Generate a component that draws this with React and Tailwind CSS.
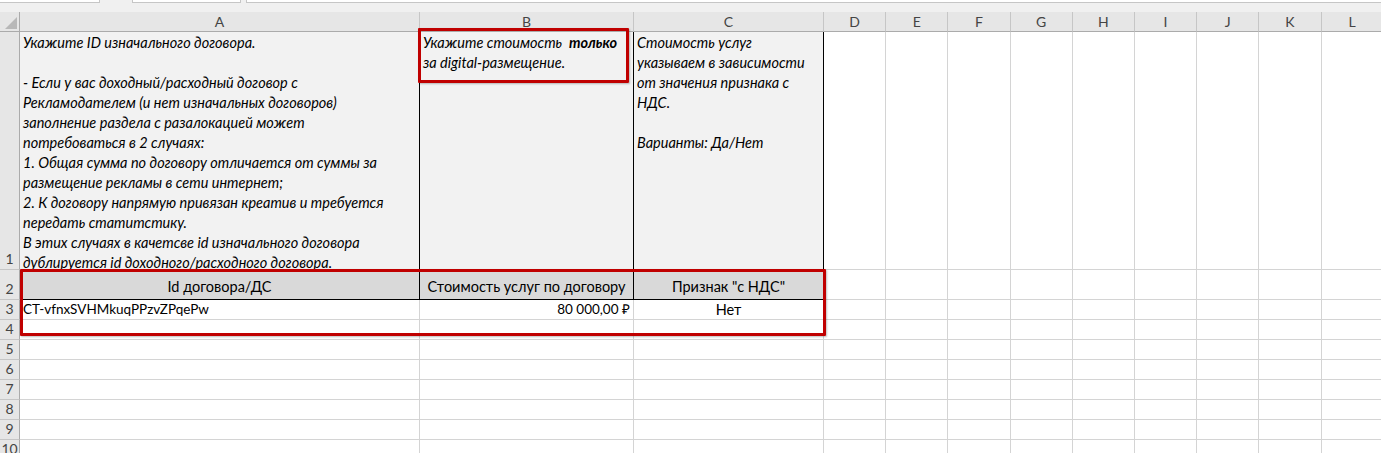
import React from 'react';

const font = { fontFamily: 'Lato, "Open Sans", sans-serif' };

const extraCols = ['D', 'E', 'F', 'G', 'H', 'I', 'J', 'K', 'L'];

// пустые ячейки справа от таблицы
function EmptyCells({ row }) {
    return extraCols.map((c) => (
        <div key={row + c} className="border-r border-b border-[#d4d4d4] bg-white" />
    ));
}

function RowNum({ n }) {
    return (
        <div className="flex items-end justify-center pb-[1px] bg-[#e6e6e6] border-r border-b border-r-[#ababab] border-b-[#c6c6c6] text-[14px] leading-[18px] text-[#444]">
            {n}
        </div>
    );
}

export default function App() {
    return (
        <div className="relative w-[1381px] h-[453px] overflow-hidden bg-white text-black" style={font}>
            {/* полоса сверху */}
            <div className="h-[12px] bg-[#f0f0f0] flex items-start">
                <div className="h-[3px] w-[100px] bg-white border-b border-r border-[#c6c6c6]" />
                <div className="h-[3px] w-[32px]" />
                <div className="h-[3px] w-[109px] bg-white border-b border-x border-[#c6c6c6]" />
                <div className="h-[3px] w-[5px]" />
                <div className="h-[3px] flex-1 bg-white border-b border-l border-[#c6c6c6]" />
            </div>

            <div className="grid grid-cols-[20px_400px_214px_190px_repeat(9,62.2px)] grid-rows-[20px_238px_30px_20px_20px_repeat(6,20px)]">
                {/* заголовки колонок */}
                <div className="relative bg-[#e6e6e6] border-r border-b border-r-[#ababab] border-b-[#ababab]">
                    <div className="absolute right-[2px] bottom-[2px] w-0 h-0" style={{ borderBottom: '12px solid #b8b8b8', borderLeft: '12px solid transparent' }} />
                </div>
                {['A', 'B', 'C', ...extraCols].map((c) => (
                    <div key={c} className="flex items-center justify-center bg-[#e6e6e6] border-r border-b border-r-[#c6c6c6] border-b-[#ababab] text-[14px] text-[#444]">
                        {c}
                    </div>
                ))}

                {/* строка 1 */}
                <RowNum n={1} />
                <div className="bg-[#f2f2f2] border-r border-black pl-[3px] pt-[1px] italic text-[14.5px] leading-[20px] whitespace-nowrap overflow-hidden">
                    Укажите ID изначального договора.<br />
                    <br />
                    - Если у вас доходный/расходный договор с<br />
                    Рекламодателем (и нет изначальных договоров)<br />
                    заполнение раздела с разалокацией может<br />
                    потребоваться в 2 случаях:<br />
                    1. Общая сумма по договору отличается от суммы за<br />
                    размещение рекламы в сети интернет;<br />
                    2. К договору напрямую привязан креатив и требуется<br />
                    передать статитстику.<br />
                    В этих случаях в качетсве id изначального договора<br />
                    дублируется id доходного/расходного договора.
                </div>
                <div className="bg-[#f2f2f2] border-r border-black pl-[3px] pt-[1px] italic text-[14.5px] leading-[20px] whitespace-nowrap overflow-hidden">
                    Укажите стоимость{'\u00a0 '}<b>только</b><br />
                    за digital-размещение.
                </div>
                <div className="bg-[#f2f2f2] border-r border-black pl-[3px] pt-[1px] italic text-[14.5px] leading-[20px] whitespace-nowrap overflow-hidden">
                    Стоимость услуг<br />
                    указываем в зависимости<br />
                    от значения признака с<br />
                    НДС.<br />
                    <br />
                    Варианты: Да/Нет
                </div>
                <EmptyCells row="1" />

                {/* строка 2 */}
                <RowNum n={2} />
                <div className="flex items-end justify-center pb-[1px] bg-[#d9d9d9] border-r border-b border-black text-[14.5px]">Id договора/ДС</div>
                <div className="flex items-end justify-center pb-[1px] bg-[#d9d9d9] border-r border-b border-black text-[14.5px]">Стоимость услуг по договору</div>
                <div className="flex items-end justify-center pb-[1px] bg-[#d9d9d9] border-r border-b border-black text-[14.5px]">Признак "с НДС"</div>
                <EmptyCells row="2" />

                {/* строка 3 */}
                <RowNum n={3} />
                <div className="flex items-center pl-[3px] border-r border-b border-[#d4d4d4] text-[13.5px]">CT-vfnxSVHMkuqPPzvZPqePw</div>
                <div className="flex items-center justify-end pr-[3px] border-r border-b border-[#d4d4d4] text-[13.5px]">80 000,00 ₽</div>
                <div className="flex items-center justify-center border-r border-b border-[#d4d4d4] text-[14.5px]">Нет</div>
                <EmptyCells row="3" />

                {[4, 5, 6, 7, 8, 9, 10].map((n) => (
                    <React.Fragment key={n}>
                        <RowNum n={n} />
                        <div className="border-r border-b border-[#d4d4d4]" />
                        <div className="border-r border-b border-[#d4d4d4]" />
                        <div className="border-r border-b border-[#d4d4d4]" />
                        <EmptyCells row={String(n)} />
                    </React.Fragment>
                ))}
            </div>

            {/* красные рамки */}
            <div className="absolute left-[418px] top-[28px] w-[211px] h-[55px] border-[3px] border-[#c00000] rounded-[1px] shadow-[1px_1px_2px_rgba(0,0,0,0.25)]" />
            <div className="absolute left-[20px] top-[269px] w-[806px] h-[67px] border-[3px] border-[#c00000] rounded-[1px] shadow-[1px_1px_2px_rgba(0,0,0,0.25)]" />
        </div>
    );
}
